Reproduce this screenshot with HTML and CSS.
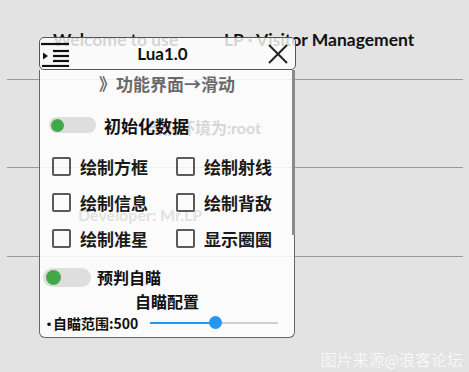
FILE: index.html
```html
<!DOCTYPE html>
<html lang="zh">
  <head>
    <meta charset="UTF-8" />
    <title>Lua1.0</title>
    <link rel="stylesheet" href="styles.css">
  </head>
  <body>
    <div class="doc">
      <div class="doc-row doc-head">
        <span class="welcome">Welcome to use</span>
        <span class="brand">LP · Visitor Management</span>
      </div>
      <div class="doc-row doc-env">当前环境为:root</div>
      <div class="doc-row doc-dev">Developer: Mr.LP</div>
    </div>

    <div class="panel">
      <div class="panel-head">
        <svg class="menu-icon" width="28" height="26" viewBox="0 0 28 26">
          <g stroke="#111" stroke-width="2.2">
            <line x1="0" y1="3" x2="28" y2="3" />
            <line x1="12" y1="10" x2="28" y2="10" />
            <line x1="12" y1="15" x2="28" y2="15" />
            <line x1="12" y1="20" x2="28" y2="20" />
            <line x1="1" y1="25" x2="28" y2="25" />
          </g>
          <polygon points="2,11.5 7,15 2,18.5" fill="#111" />
        </svg>
        <span class="panel-title">Lua1.0</span>
        <svg class="close-icon" width="20" height="20" viewBox="0 0 20 20">
          <g stroke="#222" stroke-width="2">
            <line x1="1" y1="1" x2="19" y2="19" />
            <line x1="19" y1="1" x2="1" y2="19" />
          </g>
        </svg>
      </div>

      <div class="panel-body">
        <div class="scroll-thumb"></div>
        <div class="section-title">》功能界面→滑动</div>

        <div class="switch-row first">
          <span class="switch"><span class="knob"></span></span>
          <span class="switch-label">初始化数据</span>
        </div>

        <div class="checks">
          <label class="check"><span class="box"></span>绘制方框</label>
          <label class="check"><span class="box"></span>绘制射线</label>
          <label class="check"><span class="box"></span>绘制信息</label>
          <label class="check"><span class="box"></span>绘制背敌</label>
          <label class="check"><span class="box"></span>绘制准星</label>
          <label class="check"><span class="box"></span>显示圈圈</label>
        </div>

        <div class="switch-row second">
          <span class="switch big"><span class="knob"></span></span>
          <span class="switch-label small">预判自瞄</span>
        </div>

        <div class="sub-title">自瞄配置</div>

        <div class="range-row">
          <span class="dot">·</span>
          <span class="range-label">自瞄范围:500</span>
          <div class="slider">
            <div class="slider-fill" style="width: 51%"></div>
            <div class="slider-thumb" style="left: 51%"></div>
          </div>
        </div>
      </div>
    </div>

    <div class="watermark">图片来源@浪客论坛</div>
  </body>
</html>
```

FILE: styles.css
```css
body {
  margin: 0;
  background-color: #e3e3e3;
  font-family: "Lato", "Noto Sans CJK SC", sans-serif;
  color: #111;
}
.doc {
  padding: 0 6px 0 7px;
}
.doc-row {
  display: flex;
  align-items: center;
  border-bottom: 1px solid #9a9a9a;
  font-weight: 700;
}
.doc-head {
  height: 79px;
  padding-left: 46px;
  font-size: 17.5px;
}
.welcome {
  width: 171px;
}
.doc-env {
  height: 88px;
  padding-left: 140px;
  padding-top: 6px;
  box-sizing: border-box;
  font-size: 16px;
  color: #000;
}
.doc-dev {
  height: 89px;
  padding-left: 71px;
  padding-top: 4px;
  box-sizing: border-box;
  font-size: 16px;
  color: #444;
}

.panel {
  position: absolute;
  left: 39px;
  top: 37px;
  width: 257px;
}
.panel-head {
  display: flex;
  align-items: center;
  height: 31px;
  border: 1px solid #555;
  border-radius: 5px;
  background-color: rgba(255, 255, 255, 0.82);
  padding: 0 7px 0 1px;
}
.menu-icon {
  display: block;
  margin-top: 1px;
}
.panel-title {
  flex: 1;
  text-align: center;
  font-size: 17px;
  font-weight: 700;
  margin-right: 12px;
}
.close-icon {
  display: block;
}
.panel-body {
  position: relative;
  border: 1px solid #666;
  border-top: none;
  border-radius: 0 0 6px 6px;
  margin: 0 1px 0 0;
  padding-bottom: 3px;
  background-color: rgba(255, 255, 255, 0.84);
  font-family: "Noto Sans CJK SC", sans-serif;
  font-weight: 700;
}
.scroll-thumb {
  position: absolute;
  right: -1px;
  top: 0;
  width: 3px;
  height: 165px;
  background-color: #8a8a8a;
}
.section-title {
  height: 28px;
  line-height: 28px;
  text-align: center;
  font-size: 17px;
  color: #6a6a6a;
}
.switch-row {
  display: flex;
  align-items: center;
}
.switch-row.first {
  height: 36px;
  margin-top: 9px;
  padding-left: 9px;
}
.switch-row.second {
  height: 24px;
  margin-top: 9px;
  padding-left: 3px;
}
.switch {
  position: relative;
  width: 47px;
  height: 16px;
  border-radius: 8px;
  background-color: #dedede;
  margin-right: 8px;
}
.switch .knob {
  position: absolute;
  left: 2px;
  top: 1.5px;
  width: 13px;
  height: 13px;
  border-radius: 50%;
  background-color: #43a847;
}
.switch.big {
  width: 48px;
  height: 19px;
  border-radius: 10px;
  margin-right: 6px;
}
.switch.big .knob {
  left: 3px;
  top: 2px;
  width: 15px;
  height: 15px;
}
.switch-label {
  font-size: 17px;
}
.switch-label.small {
  font-size: 16px;
}
.checks {
  display: grid;
  grid-template-columns: 124px 1fr;
  margin-top: 5px;
  padding-left: 12px;
}
.check {
  display: flex;
  align-items: center;
  height: 36px;
  font-size: 17px;
  color: #1a1a1a;
}
.box {
  width: 15px;
  height: 15px;
  border: 2px solid #5a5a5a;
  border-radius: 2px;
  margin-right: 9px;
}
.sub-title {
  height: 22px;
  line-height: 22px;
  margin-top: 1px;
  text-align: center;
  font-size: 16px;
}
.range-row {
  display: flex;
  align-items: center;
  height: 22px;
  padding-left: 2px;
}
.dot {
  font-size: 14px;
  width: 11px;
}
.range-label {
  font-size: 14px;
  width: 97px;
}
.slider {
  position: relative;
  width: 128px;
  height: 2px;
  background-color: #cfcfcf;
}
.slider-fill {
  height: 2px;
  background-color: #2196f3;
}
.slider-thumb {
  position: absolute;
  top: -6px;
  width: 13px;
  height: 13px;
  margin-left: -6px;
  border-radius: 50%;
  background-color: #2196f3;
}
.watermark {
  position: absolute;
  right: 6px;
  top: 347px;
  font-family: "Noto Sans CJK SC", sans-serif;
  font-weight: 300;
  font-size: 16px;
  color: rgba(255, 255, 255, 0.95);
}
```
